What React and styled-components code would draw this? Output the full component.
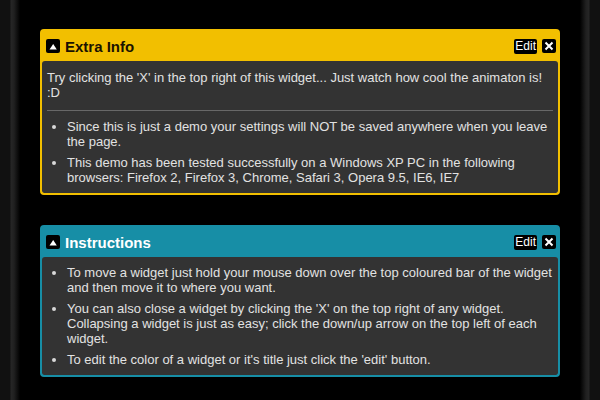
import React from 'react'
import styled, {createGlobalStyle} from 'styled-components'

const GlobalStl = createGlobalStyle`
  html, body {
    margin: 0;
    padding: 0;
    height: 100%;
  }
  body {
    font-family: "Liberation Sans", Arial, sans-serif;
    background: linear-gradient(to right,
      #111 0, #111 10px, #262626 11px, #202020 14px, #000 20px,
      #000 calc(100% - 20px), #202020 calc(100% - 14px), #262626 calc(100% - 11px), #111 calc(100% - 10px), #111 100%);
  }
`

const PageStl = styled.div`
  margin: 0 20px;
  padding: 29px 20px;
  min-height: 400px;
  box-sizing: border-box;
  background: #000;
  display: flex;
  flex-direction: column;
  gap: 30px;
`

const WidgetStl = styled.div`
  border: 2px solid ${p => p.color};
  border-radius: 4px;
  background: ${p => p.color};
  overflow: hidden;
`

const HeaderStl = styled.div`
  height: 30px;
  display: flex;
  align-items: center;
  padding: 0 2px 0 4px;
  gap: 5px;
`

const TitleStl = styled.h3`
  margin: 0;
  flex: 1;
  font-size: 15px;
  font-weight: bold;
  color: ${p => p.light ? '#fff' : '#1a1200'};
`

const IconBtnStl = styled.span`
  flex: 0 0 14px;
  width: 14px;
  height: 14px;
  background: #000;
  border-radius: 2px;
  display: flex;
  align-items: center;
  justify-content: center;

  svg {
    display: block;
    flex: 0 0 14px;
  }
`

const EditBtnStl = styled.span`
  flex: 0 0 auto;
  height: 15px;
  line-height: 15px;
  padding: 0 1px;
  background: #000;
  border-radius: 2px;
  color: #fff;
  font-size: 12px;
`

const BodyStl = styled.div`
  background: #333;
  border-radius: 3px 3px 2px 2px;
  padding: 8px 5px 8px;
  color: #e2e2e2;
  font-size: 13px;
  line-height: 15px;
`

const IntroStl = styled.p`
  margin: 1px 0 10px;
`

const RuleStl = styled.hr`
  border: 0;
  height: 1px;
  background: #686868;
  margin: 0 0 8px;
`

const ListStl = styled.ul`
  margin: 0;
  padding: 0 0 0 20px;
  display: flex;
  flex-direction: column;
  gap: 6px;

  li::marker {
    color: #d8d8d8;
    font-size: 14px;
  }
`

const Collapse = () => (
  <IconBtnStl>
    <svg width="14" height="14" viewBox="0 0 14 14">
      <polygon points="3.5,10.5 7.2,5 10.8,10.5" fill="#fff" />
    </svg>
  </IconBtnStl>
)

const Close = () => (
  <IconBtnStl>
    <svg width="14" height="14" viewBox="0 0 14 14">
      <path d="M3.5 3.5 L10.5 10.5 M10.5 3.5 L3.5 10.5" stroke="#fff" strokeWidth="2" />
    </svg>
  </IconBtnStl>
)

const Widget = ({title, color, light, children}) => (
  <WidgetStl color={color}>
    <HeaderStl>
      <Collapse />
      <TitleStl light={light}>{title}</TitleStl>
      <EditBtnStl>Edit</EditBtnStl>
      <Close />
    </HeaderStl>
    <BodyStl>{children}</BodyStl>
  </WidgetStl>
)

export default function App() {
  return (
    <>
      <GlobalStl />
      <PageStl>
        <Widget title="Extra Info" color="#f2bf00">
          <IntroStl>Try clicking the 'X' in the top right of this widget... Just watch how cool the animaton is! :D</IntroStl>
          <RuleStl />
          <ListStl>
            <li>Since this is just a demo your settings will NOT be saved anywhere when you leave the page.</li>
            <li>This demo has been tested successfully on a Windows XP PC in the following browsers: Firefox 2, Firefox 3, Chrome, Safari 3, Opera 9.5, IE6, IE7</li>
          </ListStl>
        </Widget>
        <Widget title="Instructions" color="#178ea6" light>
          <ListStl>
            <li>To move a widget just hold your mouse down over the top coloured bar of the widget and then move it to where you want.</li>
            <li>You can also close a widget by clicking the 'X' on the top right of any widget. Collapsing a widget is just as easy; click the down/up arrow on the top left of each widget.</li>
            <li>To edit the color of a widget or it's title just click the 'edit' button.</li>
          </ListStl>
        </Widget>
      </PageStl>
    </>
  )
}
